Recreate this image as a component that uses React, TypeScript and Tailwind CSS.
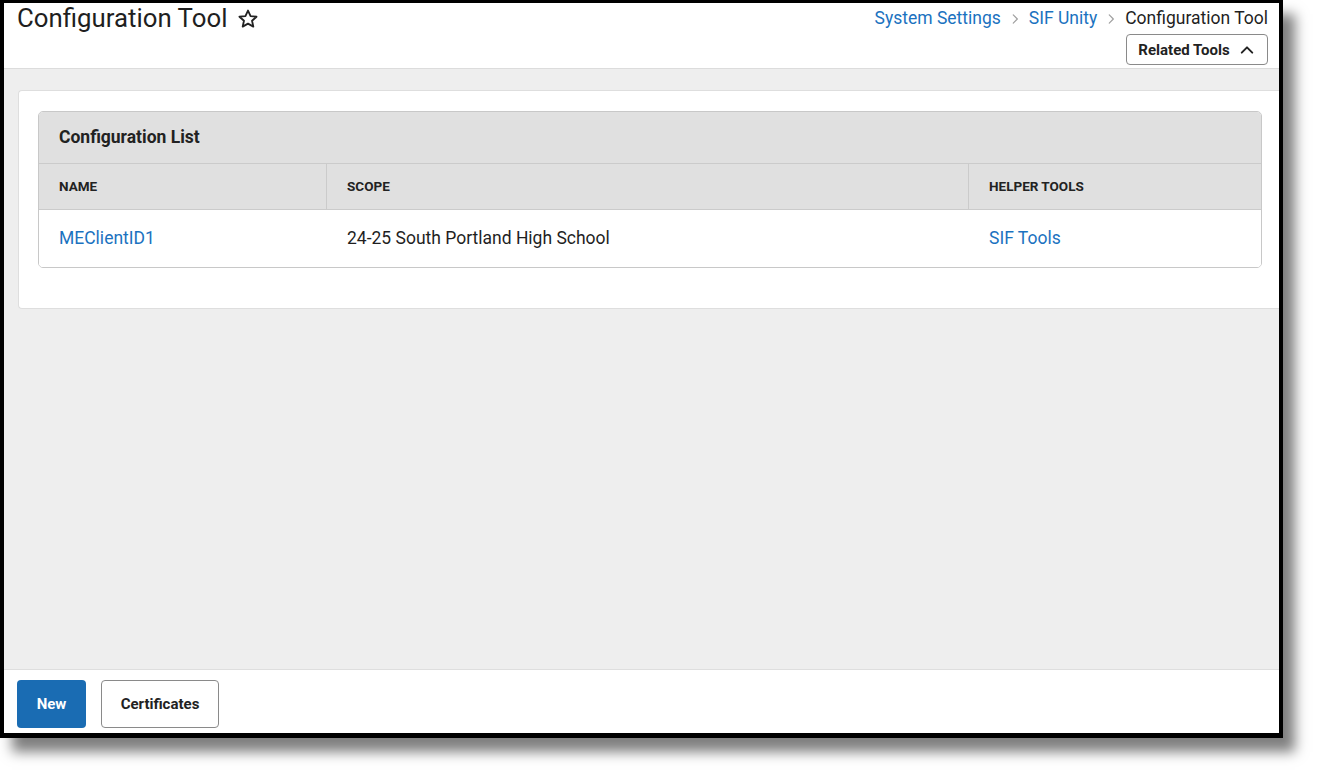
import React from 'react';

const ChevronRight = () => (
  <svg width="14" height="14" viewBox="0 0 24 24" fill="none" stroke="#9e9e9e" strokeWidth="2" strokeLinecap="round" strokeLinejoin="round" className="mx-[7px]">
    <path d="M9 5l7 7-7 7" />
  </svg>
);

const ConfigurationToolPage = () => {
  return (
    <div className="w-[1317px] h-[773px] bg-white font-['Roboto',sans-serif] text-[#212121]">
      <div className="w-[1283px] h-[738px] border-l-4 border-r-4 border-t-[3px] border-b-[5px] border-black shadow-[12px_14px_12px_rgba(0,0,0,0.5)] flex flex-col overflow-hidden">
        {/* Header */}
        <div className="h-[66px] bg-white border-b border-[#dcdcdc] flex justify-between pl-[13px] pr-[11px]">
          <div className="flex items-start">
            <h1 className="text-[25.8px] leading-[31px] text-[#1f1f1f]">Configuration Tool</h1>
            <svg width="22" height="22" viewBox="0 0 24 24" fill="none" stroke="#222" strokeWidth="2" strokeLinejoin="round" className="ml-[10px] mt-[5px]">
              <path d="M12 2.8l2.8 6 6.5.7-4.9 4.4 1.4 6.4L12 17l-5.8 3.3 1.4-6.4-4.9-4.4 6.5-.7z" />
            </svg>
          </div>
          <div className="flex flex-col items-end">
            <div className="flex items-center text-[17.5px] leading-[31px]">
              <a className="text-[#1b72c0]">System Settings</a>
              <ChevronRight />
              <a className="text-[#1b72c0]">SIF Unity</a>
              <ChevronRight />
              <span className="text-[#1f1f1f]">Configuration Tool</span>
            </div>
            <button className="h-[31px] w-[142px] border border-[#8a8a8a] rounded-[4px] flex items-center justify-center gap-[8px] pt-[1px] text-[15px] font-bold text-[#222]">
              Related Tools
              <svg width="18" height="18" viewBox="0 0 24 24" fill="none" stroke="#222" strokeWidth="2.6" strokeLinecap="round" strokeLinejoin="round">
                <path d="M5 15.5l7-7 7 7" />
              </svg>
            </button>
          </div>
        </div>

        {/* Main */}
        <div className="flex-1 bg-[#eeeeee] pt-[21px] pl-[14px]">
          <div className="bg-white border border-r-0 border-[#dedede] rounded-l-[4px] pt-[20px] pl-[19px] pr-[17px] pb-[40px]">
            <div className="border border-[#c8c8c8] rounded-[5px] overflow-hidden">
              <div className="h-[52px] bg-[#e0e0e0] border-b border-[#cbcbcb] flex items-center px-[20px]">
                <h2 className="text-[17.5px] font-bold text-[#222]">Configuration List</h2>
              </div>
              <div className="grid grid-cols-[288px_642px_1fr] bg-[#e0e0e0] h-[46px] border-b border-[#cbcbcb] text-[13.5px] font-bold text-[#222]">
                <div className="flex items-center px-[20px] border-r border-[#cbcbcb]">NAME</div>
                <div className="flex items-center px-[20px] border-r border-[#cbcbcb]">SCOPE</div>
                <div className="flex items-center px-[20px]">HELPER TOOLS</div>
              </div>
              <div className="grid grid-cols-[288px_642px_1fr] h-[57px] text-[17.5px] bg-white">
                <div className="flex items-center px-[20px]"><a className="text-[#1b72c0]">MEClientID1</a></div>
                <div className="flex items-center px-[20px] text-[#1f1f1f]">24-25 South Portland High School</div>
                <div className="flex items-center px-[20px]"><a className="text-[#1b72c0]">SIF Tools</a></div>
              </div>
            </div>
          </div>
        </div>

        {/* Footer */}
        <div className="h-[64px] bg-white border-t border-[#dedede] flex items-start gap-[15px] pl-[13px] pt-[10px]">
          <button className="h-[48px] w-[69px] bg-[#1a6cb3] rounded-[4px] text-white text-[15px] font-bold">New</button>
          <button className="h-[48px] w-[118px] border border-[#8a8a8a] rounded-[4px] text-[#222] text-[15px] font-bold">Certificates</button>
        </div>
      </div>
    </div>
  );
};

export default ConfigurationToolPage;
